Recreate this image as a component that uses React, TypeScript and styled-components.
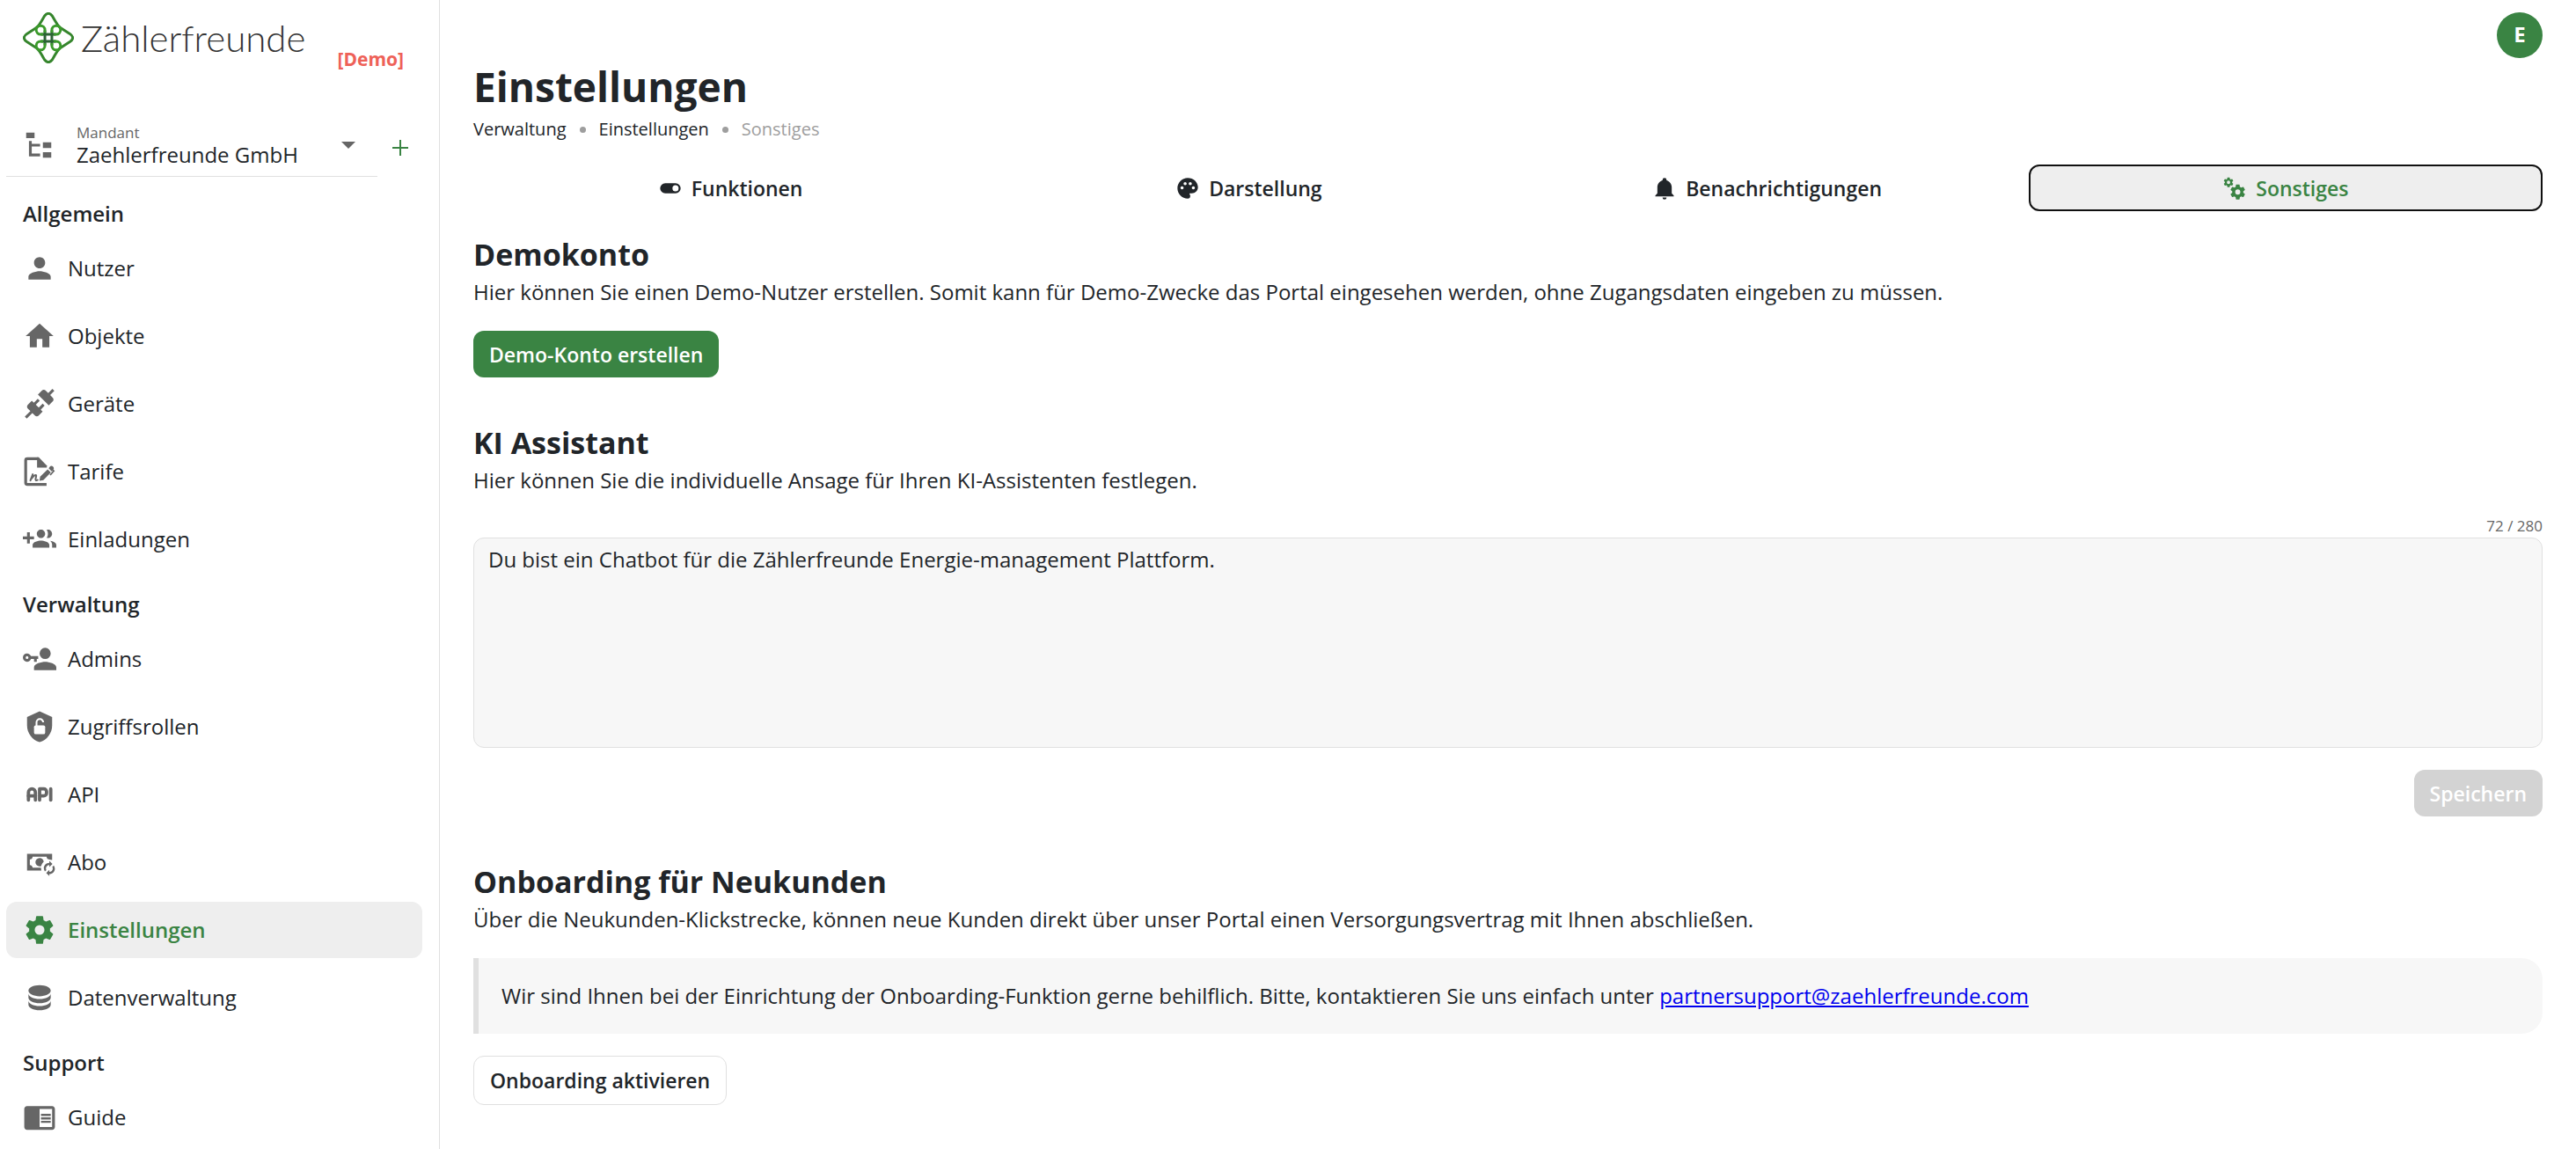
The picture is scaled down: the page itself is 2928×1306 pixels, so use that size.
import React, { useState } from "react";
import styled, { createGlobalStyle, css } from "styled-components";
import {
  MdChromeReaderMode,
  MdHome,
  MdPalette,
  MdPerson,
} from "react-icons/md";
import { TbApi } from "react-icons/tb";

const color = {
  text: "#212529",
  muted: "#666666",
  faint: "#9e9e9e",
  green: "#3a8443",
  red: "#ee6158",
  line: "#e0e0e0",
  panel: "#f7f7f7",
  selected: "#eeeeee",
  disabled: "#d3d3d3",
};

const GlobalStyle = createGlobalStyle`
  * { box-sizing: border-box; }
  body {
    margin: 0;
    background: #ffffff;
    color: ${color.text};
    font-family: "Open Sans", "Noto Sans", sans-serif;
    font-size: 24px;
    line-height: 38px;
  }
  button, select, textarea { font: inherit; color: inherit; }
`;

const Page = styled.div`
  display: flex;
  min-height: 100vh;
`;

/* ---------- sidebar ---------- */

const Sidebar = styled.aside`
  flex: 0 0 500px;
  border-right: 1px solid ${color.line};
`;

const Brand = styled.header`
  display: flex;
  align-items: flex-end;
  justify-content: space-between;
  height: 140px;
  padding: 14px 40px 60px 26px;
`;

const LogoLink = styled.a`
  display: flex;
  align-items: center;
  align-self: flex-start;
  gap: 8px;
  color: #333333;
  text-decoration: none;
  font-family: Lato, sans-serif;
  font-size: 42px;
  font-weight: 300;
  line-height: 58px;
`;

const DemoTag = styled.span`
  color: ${color.red};
  font-size: 21px;
  font-weight: 700;
  line-height: 26px;
`;

const TenantRow = styled.div`
  display: flex;
  align-items: stretch;
  padding: 0 18px 0 7px;
`;

const TenantField = styled.div`
  flex: 0 0 422px;
  display: flex;
  align-items: center;
  gap: 24px;
  padding: 0 25px 10px 18px;
  border-bottom: 1px solid ${color.line};
  color: ${color.muted};
`;

const TenantText = styled.div`
  flex: 1;
  display: flex;
  flex-direction: column;
`;

const TenantLabel = styled.label`
  font-size: 17px;
  line-height: 22px;
`;

const TenantSelect = styled.select`
  appearance: none;
  width: 100%;
  height: 28px;
  padding: 0;
  border: 0;
  background: transparent;
  color: ${color.text};
  line-height: 28px;
`;

const AddButton = styled.button`
  flex: 1;
  display: flex;
  align-items: center;
  justify-content: center;
  padding: 0 0 6px;
  border: 0;
  background: none;
  color: ${color.green};
`;

const NavHeading = styled.h2`
  margin: 0;
  padding: 24px 26px 12px;
  font-size: 24px;
  font-weight: 600;
  line-height: 36px;
`;

const NavList = styled.ul`
  display: flex;
  flex-direction: column;
  gap: 13px;
  margin: 0;
  padding: 0 19px 0 7px;
  list-style: none;
`;

const NavLink = styled.a<{ $active?: boolean }>`
  display: flex;
  align-items: center;
  gap: 13px;
  height: 64px;
  padding: 0 19px;
  border-radius: 12px;
  color: ${color.text};
  text-decoration: none;

  svg {
    flex: none;
    color: ${color.muted};
  }

  ${(p) =>
    p.$active &&
    css`
      background: ${color.selected};
      color: ${color.green};
      font-weight: 600;
      svg { color: ${color.green}; }
    `}
`;

/* ---------- main ---------- */

const Main = styled.main`
  flex: 1;
  min-width: 0;
  padding: 14px 38px;
`;

const TopBar = styled.div`
  display: flex;
  justify-content: flex-end;
`;

const Avatar = styled.button`
  width: 52px;
  height: 52px;
  padding: 0 0 2px;
  border: 0;
  border-radius: 50%;
  background: ${color.green};
  color: #ffffff;
  font-size: 24px;
  font-weight: 700;
`;

const Title = styled.h1`
  margin: 0;
  font-size: 46px;
  font-weight: 700;
  line-height: 64px;
`;

const Crumbs = styled.ol`
  display: flex;
  margin: 0;
  padding: 0;
  list-style: none;
  font-size: 20px;
  line-height: 34px;
`;

const Crumb = styled.li`
  display: flex;
  align-items: center;

  a {
    color: ${color.text};
    text-decoration: none;
  }

  &:last-child { color: ${color.faint}; }

  &:not(:last-child)::after {
    content: "";
    width: 7px;
    height: 7px;
    margin: 0 15px;
    border-radius: 50%;
    background: ${color.faint};
  }
`;

const Tabs = styled.div`
  display: grid;
  grid-template-columns: repeat(4, 1fr);
  gap: 5px;
  margin-top: 23px;
`;

const Tab = styled.button<{ $active?: boolean }>`
  display: flex;
  align-items: center;
  justify-content: center;
  gap: 10px;
  height: 53px;
  padding: 0;
  border: 2px solid ${(p) => (p.$active ? "#101010" : "transparent")};
  border-radius: 12px;
  background: ${(p) => (p.$active ? color.selected : "transparent")};
  color: ${(p) => (p.$active ? color.green : color.text)};
  font-size: 23px;
  font-weight: 600;
`;

const Section = styled.section<{ $first?: boolean }>`
  display: flex;
  flex-direction: column;
  margin-top: ${(p) => (p.$first ? 25 : 50)}px;
`;

const SectionTitle = styled.h2`
  margin: 0;
  font-size: 34px;
  font-weight: 700;
  line-height: 48px;
`;

const Text = styled.p`
  margin: 0;
`;

const Button = styled.button<{ $kind: "primary" | "outline" }>`
  align-self: flex-start;
  height: 53px;
  margin-top: 25px;
  padding: 0 18px;
  border: 0;
  border-radius: 12px;
  background: ${color.green};
  color: #ffffff;
  font-size: 23px;
  font-weight: 600;

  &:disabled {
    align-self: flex-end;
    background: ${color.disabled};
  }

  ${(p) =>
    p.$kind === "outline" &&
    css`
      height: 56px;
      border: 1px solid ${color.line};
      background: #ffffff;
      color: ${color.text};
    `}
`;

const Counter = styled.span`
  align-self: flex-end;
  margin-top: 20px;
  color: ${color.muted};
  font-size: 17px;
  line-height: 26px;
`;

const Prompt = styled.textarea`
  display: block;
  width: 100%;
  height: 239px;
  padding: 6px 16px;
  border: 1px solid ${color.line};
  border-radius: 12px;
  background: ${color.panel};
  line-height: 36px;
  resize: none;
`;

const Note = styled.blockquote`
  margin: 25px 0 0;
  padding: 24px 26px;
  border-left: 6px solid ${color.line};
  border-radius: 0 24px 24px 0;
  background: ${color.panel};

  a { color: #0000ee; }
`;

/* ---------- icons ---------- */

type IconProps = { size?: number; children: React.ReactNode };

const Icon = ({ size = 38, children }: IconProps) => (
  <svg width={size} height={size} viewBox="0 0 24 24" fill="currentColor" aria-hidden="true">
    {children}
  </svg>
);

const COG =
  "M12,15.5A3.5,3.5 0 0,1 8.5,12A3.5,3.5 0 0,1 12,8.5A3.5,3.5 0 0,1 15.5,12A3.5,3.5 0 0,1 12,15.5M19.43,12.97C19.47,12.65 19.5,12.33 19.5,12C19.5,11.67 19.47,11.34 19.43,11L21.54,9.37C21.73,9.22 21.78,8.95 21.66,8.73L19.66,5.27C19.54,5.05 19.27,4.96 19.05,5.05L16.56,6.05C16.04,5.66 15.5,5.32 14.87,5.07L14.5,2.42C14.46,2.18 14.25,2 14,2H10C9.75,2 9.54,2.18 9.5,2.42L9.13,5.07C8.5,5.32 7.96,5.66 7.44,6.05L4.95,5.05C4.73,4.96 4.46,5.05 4.34,5.27L2.34,8.73C2.21,8.95 2.27,9.22 2.46,9.37L4.57,11C4.53,11.34 4.5,11.67 4.5,12C4.5,12.33 4.53,12.65 4.57,12.97L2.46,14.63C2.27,14.78 2.21,15.05 2.34,15.27L4.34,18.73C4.46,18.95 4.73,19.03 4.95,18.95L7.44,17.94C7.96,18.34 8.5,18.68 9.13,18.93L9.5,21.58C9.54,21.82 9.75,22 10,22H14C14.25,22 14.46,21.82 14.5,21.58L14.87,18.93C15.5,18.67 16.04,18.34 16.56,17.94L19.05,18.95C19.27,19.03 19.54,18.95 19.66,18.73L21.66,15.27C21.78,15.05 21.73,14.78 21.54,14.63L19.43,12.97Z";

const Logo = () => (
  <svg width="58" height="58" viewBox="-88 -88 176 176" fill="none" strokeWidth="9" strokeLinejoin="round" aria-hidden="true">
    <path
      stroke="#35852c"
      d="M-13-76Q0-92 13-76C20-64 26-52 35-41Q39-36 46-32L74-14Q94 0 74 14L46 32Q39 36 35 41C26 52 20 64 13 76Q0 92-13 76C-20 64-26 52-35 41Q-39 36-46 32L-74 14Q-94 0-74-14L-46-32Q-39-36-35-41C-26-52-20-64-13-76Z"
    />
    <path stroke="#2b6434" d="M-12-26V26M12-26V26M-26-12H26M-26 12H26" />
    <path
      stroke="#3b9a2b"
      d="M12-18V-27A15 15 0 1 1 27-12H18M-12-18V-27A15 15 0 1 0-27-12H-18M12 18V27A15 15 0 1 0 27 12H18M-12 18V27A15 15 0 1 1-27 12H-18"
    />
  </svg>
);

const TreeIcon = () => (
  <Icon>
    <path d="M3,3H9V7H3V3M15,10H21V14H15V10M15,17H21V21H15V17M13,13H7V18H13V20H7L5,20V9H7V11H13V13Z" />
  </Icon>
);

const PlugsIcon = () => (
  <Icon>
    <path d="M21.4 7.5C22.2 8.3 22.2 9.6 21.4 10.3L18.6 13.1L10.8 5.3L13.6 2.5C14.4 1.7 15.7 1.7 16.4 2.5L18.2 4.3L21.2 1.3L22.6 2.7L19.6 5.7L21.4 7.5M15.6 13.3L14.2 11.9L11.4 14.7L9.3 12.6L12.1 9.8L10.7 8.4L7.9 11.2L6.4 9.8L3.6 12.6C2.8 13.4 2.8 14.7 3.6 15.4L5.4 17.2L1.4 21.2L2.8 22.6L6.8 18.6L8.6 20.4C9.4 21.2 10.7 21.2 11.4 20.4L14.2 17.6L12.8 16.2L15.6 13.3Z" />
  </Icon>
);

const ContractIcon = () => (
  <Icon>
    <path fill="none" stroke="currentColor" strokeWidth="2" d="M17 21.2H3.2a1.2 1.2 0 0 1-1.2-1.2V4a1.2 1.2 0 0 1 1.2-1.2H11" />
    <path d="M10.2 1.8h1.2l5.8 5.9v1.5h-7z" />
    <path
      fill="none"
      stroke="currentColor"
      strokeWidth="1.3"
      strokeLinecap="round"
      strokeLinejoin="round"
      d="M5.4 18.4l1.7-4.4M6 17.3c1.5-2 2.9-3.2 3.5-2.7.6.6-1 2.8-.2 3.6.4.3.9.1 1.3-.2"
    />
    <path d="M11.9 18.6l.5-2.9 5.4-5.3 2.3 2.3-5.4 5.4z" />
    <path d="M18.5 9.7l1-1.4c.9-1.2 3 .3 2.7 1.6l-1.4 2.1z" />
    <path fill="none" stroke="currentColor" strokeWidth="1.1" d="M21.2 10.6l1 .9-2.6 3" />
  </Icon>
);

const InviteIcon = () => (
  <Icon>
    <path d="M8 10H5V7H3v3H0v2h3v3h2v-3h3v-2zm10 1c1.66 0 2.99-1.34 2.99-3S19.66 5 18 5c-.32 0-.63.05-.91.14.57.81.9 1.79.9 2.86s-.34 2.04-.9 2.86c.28.09.59.14.91.14zm-5 0c1.66 0 2.99-1.34 2.99-3S14.66 5 13 5c-1.66 0-3 1.34-3 3s1.34 3 3 3zm6.62 2.16c.83.73 1.38 1.66 1.38 2.84v2h3v-2c0-1.54-2.37-2.49-4.38-2.84zM13 13c-2 0-6 1-6 3v2h12v-2c0-2-4-3-6-3z" />
  </Icon>
);

const KeyPersonIcon = () => (
  <Icon>
    <path d="M11,10V12H10V14H8V12H5.83C5.42,13.17 4.31,14 3,14A3,3 0 0,1 0,11A3,3 0 0,1 3,8C4.31,8 5.42,8.83 5.83,10H11M3,10A1,1 0 0,0 2,11A1,1 0 0,0 3,12A1,1 0 0,0 4,11A1,1 0 0,0 3,10M16,14C18.67,14 24,15.34 24,18V20H8V18C8,15.34 13.33,14 16,14M16,12A4,4 0 0,1 12,8A4,4 0 0,1 16,4A4,4 0 0,1 20,8A4,4 0 0,1 16,12Z" />
  </Icon>
);

const ShieldIcon = () => (
  <Icon>
    <path d="M12 1L3 5v6c0 5.55 3.84 10.74 9 12 5.16-1.26 9-6.45 9-12V5L12 1z" />
    <rect x="8" y="11" width="8" height="6.4" rx="1.2" fill="#ffffff" />
    <path d="M9.8 11.5V8.9a2.4 2.4 0 0 1 4.8 0" fill="none" stroke="#ffffff" strokeWidth="1.3" />
  </Icon>
);

const CashSyncIcon = () => (
  <Icon>
    <path d="M3 6V18H13.32C13.1 17.33 13 16.66 13 16H7C7 14.9 6.11 14 5 14V10C6.11 10 7 9.11 7 8H17C17 9.11 17.9 10 19 10V10.06C19.67 10.06 20.34 10.18 21 10.4V6H3M12 9C10.3 9.03 9 10.3 9 12C9 13.7 10.3 14.94 12 15C12.38 15 12.77 14.92 13.14 14.77C13.41 13.67 13.86 12.63 14.97 11.61C14.85 10.28 13.59 8.97 12 9M19 11L21.25 13.25L19 15.5V14C17.15 14 15.94 16.03 16.88 17.62L15.79 18.71C13.83 15.77 15.92 12.5 19 12.5V11M19 22L16.75 19.75L19 17.5V19C20.85 19 22.06 16.97 21.12 15.38L22.21 14.29C24.17 17.23 22.08 20.5 19 20.5V22Z" />
  </Icon>
);

const CogIcon = () => (
  <Icon>
    <path d={COG} />
  </Icon>
);

const DatabaseIcon = () => (
  <Icon>
    <path d="M12,3C7.58,3 4,4.79 4,7C4,9.21 7.58,11 12,11C16.42,11 20,9.21 20,7C20,4.79 16.42,3 12,3M4,9V12C4,14.21 7.58,16 12,16C16.42,16 20,14.21 20,12V9C20,11.21 16.42,13 12,13C7.58,13 4,11.21 4,9M4,14V17C4,19.21 7.58,21 12,21C16.42,21 20,19.21 20,17V14C20,16.21 16.42,18 12,18C7.58,18 4,16.21 4,14Z" />
  </Icon>
);

const SwitchIcon = () => (
  <Icon size={28}>
    <path d="M17,7H7A5,5 0 0,0 2,12A5,5 0 0,0 7,17H17A5,5 0 0,0 22,12A5,5 0 0,0 17,7M17,15A3,3 0 0,1 14,12A3,3 0 0,1 17,9A3,3 0 0,1 20,12A3,3 0 0,1 17,15Z" />
  </Icon>
);

const BellIcon = () => (
  <Icon size={28}>
    <path d="M21,19V20H3V19L5,17V11C5,7.9 7.03,5.17 10,4.29C10,4.19 10,4.1 10,4A2,2 0 0,1 12,2A2,2 0 0,1 14,4C14,4.1 14,4.19 14,4.29C16.97,5.17 19,7.9 19,11V17L21,19M14,21A2,2 0 0,1 12,23A2,2 0 0,1 10,21" />
  </Icon>
);

const CogsIcon = () => (
  <Icon size={28}>
    <path d={COG} transform="translate(.4 .6) scale(.47)" />
    <path d={COG} transform="translate(6.4 7) scale(.72)" />
  </Icon>
);

const CaretIcon = () => (
  <svg width="16" height="8" viewBox="0 0 16 8" fill="currentColor" aria-hidden="true">
    <path d="M0 0h16l-8 8z" />
  </svg>
);

const PlusIcon = () => (
  <svg width="18" height="18" viewBox="0 0 18 18" stroke="currentColor" strokeWidth="2" aria-hidden="true">
    <path d="M9 0v18M0 9h18" />
  </svg>
);

/* ---------- data ---------- */

const NAV = [
  {
    heading: "Allgemein",
    items: [
      { label: "Nutzer", icon: <MdPerson size={38} /> },
      { label: "Objekte", icon: <MdHome size={38} /> },
      { label: "Geräte", icon: <PlugsIcon /> },
      { label: "Tarife", icon: <ContractIcon /> },
      { label: "Einladungen", icon: <InviteIcon /> },
    ],
  },
  {
    heading: "Verwaltung",
    items: [
      { label: "Admins", icon: <KeyPersonIcon /> },
      { label: "Zugriffsrollen", icon: <ShieldIcon /> },
      { label: "API", icon: <TbApi size={38} strokeWidth={2.4} /> },
      { label: "Abo", icon: <CashSyncIcon /> },
      { label: "Einstellungen", icon: <CogIcon />, active: true },
      { label: "Datenverwaltung", icon: <DatabaseIcon /> },
    ],
  },
  {
    heading: "Support",
    items: [{ label: "Guide", icon: <MdChromeReaderMode size={38} /> }],
  },
];

const TABS = [
  { label: "Funktionen", icon: <SwitchIcon /> },
  { label: "Darstellung", icon: <MdPalette size={28} /> },
  { label: "Benachrichtigungen", icon: <BellIcon /> },
  { label: "Sonstiges", icon: <CogsIcon /> },
];

export default function App() {
  const [tab, setTab] = useState("Sonstiges");
  const [prompt, setPrompt] = useState(
    "Du bist ein Chatbot für die Zählerfreunde Energie-management Plattform."
  );
  const used = prompt.length + 1;

  return (
    <Page>
      <GlobalStyle />
      <Sidebar>
        <Brand>
          <LogoLink href="#">
            <Logo />
            Zählerfreunde
          </LogoLink>
          <DemoTag>[Demo]</DemoTag>
        </Brand>
        <TenantRow>
          <TenantField>
            <TreeIcon />
            <TenantText>
              <TenantLabel htmlFor="tenant">Mandant</TenantLabel>
              <TenantSelect id="tenant">
                <option>Zaehlerfreunde GmbH</option>
              </TenantSelect>
            </TenantText>
            <CaretIcon />
          </TenantField>
          <AddButton type="button" aria-label="Mandant hinzufügen">
            <PlusIcon />
          </AddButton>
        </TenantRow>
        <nav>
          {NAV.map((group) => (
            <React.Fragment key={group.heading}>
              <NavHeading>{group.heading}</NavHeading>
              <NavList>
                {group.items.map((item) => (
                  <li key={item.label}>
                    <NavLink href="#" $active={"active" in item}>
                      {item.icon}
                      {item.label}
                    </NavLink>
                  </li>
                ))}
              </NavList>
            </React.Fragment>
          ))}
        </nav>
      </Sidebar>

      <Main>
        <TopBar>
          <Avatar type="button">E</Avatar>
        </TopBar>
        <Title>Einstellungen</Title>
        <Crumbs>
          <Crumb><a href="#">Verwaltung</a></Crumb>
          <Crumb><a href="#">Einstellungen</a></Crumb>
          <Crumb>Sonstiges</Crumb>
        </Crumbs>
        <Tabs role="tablist">
          {TABS.map(({ label, icon }) => (
            <Tab
              key={label}
              type="button"
              role="tab"
              aria-selected={tab === label}
              $active={tab === label}
              onClick={() => setTab(label)}
            >
              {icon}
              {label}
            </Tab>
          ))}
        </Tabs>

        <Section $first>
          <SectionTitle>Demokonto</SectionTitle>
          <Text>
            Hier können Sie einen Demo-Nutzer erstellen. Somit kann für Demo-Zwecke das Portal
            eingesehen werden, ohne Zugangsdaten eingeben zu müssen.
          </Text>
          <Button type="button" $kind="primary">Demo-Konto erstellen</Button>
        </Section>

        <Section>
          <SectionTitle id="assistant">KI Assistant</SectionTitle>
          <Text>Hier können Sie die individuelle Ansage für Ihren KI-Assistenten festlegen.</Text>
          <Counter>{used} / 280</Counter>
          <Prompt
            aria-labelledby="assistant"
            value={prompt}
            onChange={(e) => setPrompt(e.target.value)}
          />
          <Button type="button" $kind="primary" disabled>Speichern</Button>
        </Section>

        <Section>
          <SectionTitle>Onboarding für Neukunden</SectionTitle>
          <Text>
            Über die Neukunden-Klickstrecke, können neue Kunden direkt über unser Portal einen
            Versorgungsvertrag mit Ihnen abschließen.
          </Text>
          <Note>
            Wir sind Ihnen bei der Einrichtung der Onboarding-Funktion gerne behilflich. Bitte,
            kontaktieren Sie uns einfach unter{" "}
            <a href="mailto:partnersupport@zaehlerfreunde.com">partnersupport@zaehlerfreunde.com</a>
          </Note>
          <Button type="button" $kind="outline">Onboarding aktivieren</Button>
        </Section>
      </Main>
    </Page>
  );
}
